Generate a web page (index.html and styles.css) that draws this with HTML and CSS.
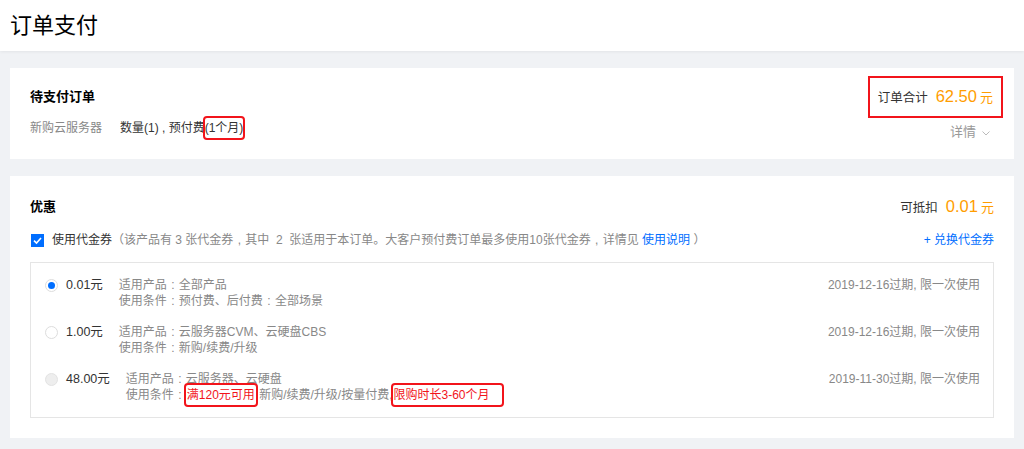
FILE: index.html
```html
<!DOCTYPE html>
<html lang="zh-CN">
<head>
<meta charset="utf-8">
<title>订单支付</title>
<link rel="stylesheet" href="styles.css">
</head>
<body>
<header class="topbar"><h1 class="title">订单支付</h1></header>
<main class="main">
  <section class="card order">
    <div class="order-left">
      <h2 class="card-title">待支付订单</h2>
      <div class="order-line">
        <span class="muted">新购云服务器</span>
        <span class="dark">数量(1) , 预付费<span class="mark mark-month">(1个月)</span></span>
      </div>
    </div>
    <div class="order-right">
      <div class="total"><span class="total-label">订单合计</span><span class="price">62.50</span><span class="unit">元</span></div>
      <div class="detail">详情<svg class="chev" width="8" height="5" viewBox="0 0 8 5"><path d="M0.5 0.5 L4 4 L7.5 0.5" fill="none" stroke="#bbb" stroke-width="1"/></svg></div>
    </div>
  </section>

  <section class="card promo">
    <div class="promo-head">
      <h2 class="card-title">优惠</h2>
      <div class="deduct"><span class="total-label">可抵扣</span><span class="price">0.01</span><span class="unit">元</span></div>
    </div>
    <div class="promo-use">
      <label class="use">
        <span class="checkbox"><svg width="13" height="13" viewBox="0 0 13 13"><path d="M3 6.6 L5.5 9 L10 4" fill="none" stroke="#fff" stroke-width="1.6"/></svg></span>
        <span class="dark">使用代金券</span>
        <span class="muted">（该产品有 3 张代金券<span class="fw">,</span>其中 &nbsp;2&nbsp; 张适用于本订单。大客户预付费订单最多使用10张代金券<span class="fw">,</span>详情见 <a class="link" href="#">使用说明</a> ）</span>
      </label>
      <a class="link" href="#">+ 兑换代金券</a>
    </div>
    <div class="coupons">
      <div class="coupon">
        <span class="radio checked"></span>
        <span class="amount">0.01元</span>
        <div class="info">
          <div>适用产品<span class="fw">:</span>全部产品</div>
          <div>使用条件<span class="fw">:</span>预付费、后付费<span class="fw">:</span>全部场景</div>
        </div>
        <span class="expire">2019-12-16过期, 限一次使用</span>
      </div>
      <div class="coupon">
        <span class="radio"></span>
        <span class="amount">1.00元</span>
        <div class="info">
          <div>适用产品<span class="fw">:</span>云服务器CVM、云硬盘CBS</div>
          <div>使用条件<span class="fw">:</span>新购/续费/升级</div>
        </div>
        <span class="expire">2019-12-16过期, 限一次使用</span>
      </div>
      <div class="coupon">
        <span class="radio disabled"></span>
        <span class="amount">48.00元</span>
        <div class="info">
          <div>适用产品<span class="fw">:</span>云服务器、云硬盘</div>
          <div>使用条件<span class="fw">:</span><span class="mark red">满120元可用</span> 新购/续费/升级/按量付费,<span class="mark red mark-wide">限购时长3-60个月</span></div>
        </div>
        <span class="expire">2019-11-30过期, 限一次使用</span>
      </div>
    </div>
  </section>
</main>
</body>
</html>
```

FILE: styles.css
```css
* { box-sizing: border-box; }
html, body { margin: 0; padding: 0; }
body {
  background: #f0f2f5;
  font-family: "Liberation Sans", "Noto Sans CJK SC", sans-serif;
  font-size: 12px;
  color: #333;
}
.topbar {
  height: 51px;
  background: #fff;
  padding-left: 10px;
  box-shadow: 0 1px 3px rgba(0,0,0,0.06);
}
.title {
  margin: 0;
  font-size: 22px;
  font-weight: normal;
  line-height: 51px;
  color: #000;
}
.main {
  padding: 17px 10px;
  display: flex;
  flex-direction: column;
  gap: 17px;
}
.card {
  background: #fff;
  padding: 0 20px;
}
.card-title {
  margin: 0;
  font-size: 13px;
  font-weight: bold;
  line-height: 20px;
  color: #000;
}
.order {
  height: 91px;
  display: flex;
  justify-content: space-between;
}
.order-left { padding-top: 19px; }
.order-line {
  margin-top: 11px;
  line-height: 20px;
  display: flex;
  gap: 18px;
}
.muted { color: #888; }
.dark { color: #333; }
.fw {
  display: inline-block;
  width: 12px;
  text-align: center;
}
.mark {
  outline: 2px solid #f2141b;
  border-radius: 2px;
}
.mark-month {
  padding: 3px 0;
  outline-offset: 0;
}
.order-right {
  padding-top: 18px;
  display: flex;
  flex-direction: column;
  align-items: flex-end;
}
.total, .deduct {
  display: flex;
  align-items: baseline;
  line-height: 20px;
}
.total {
  outline: 2px solid #f2141b;
  outline-offset: 8px;
  margin-right: 1px;
}
.total-label { font-size: 12.5px; color: #333; }
.price {
  font-size: 16.5px;
  color: #ff9d00;
  margin-left: 8px;
}
.unit {
  font-size: 13px;
  color: #ff9d00;
  margin-left: 3px;
}
.detail {
  margin-top: 14px;
  margin-right: 4px;
  line-height: 20px;
  font-size: 13px;
  color: #999;
  display: flex;
  align-items: center;
  gap: 6px;
}
.chev { margin-top: 2px; }
.promo { height: 262px; padding-top: 20px; }
.promo-head {
  display: flex;
  justify-content: space-between;
  align-items: center;
}
.promo-use {
  margin-top: 12px;
  line-height: 20px;
  display: flex;
  justify-content: space-between;
  align-items: center;
}
.use { display: flex; align-items: center; }
.checkbox {
  width: 13px;
  height: 13px;
  background: #006eff;
  display: inline-flex;
  margin: 0 8px 0 1px;
}
.link { color: #006eff; text-decoration: none; }
.coupons {
  margin-top: 12px;
  border: 1px solid #e5e5e5;
  padding: 14px 13px 14px 14px;
  display: flex;
  flex-direction: column;
  gap: 15px;
}
.coupon {
  display: flex;
  align-items: flex-start;
  line-height: 16px;
}
.radio {
  width: 13px;
  height: 13px;
  border-radius: 50%;
  border: 1px solid #ddd;
  background: #fff;
  margin-top: 2px;
  margin-right: 8px;
  flex: none;
  display: flex;
  align-items: center;
  justify-content: center;
}
.radio.checked::after {
  content: "";
  width: 7px;
  height: 7px;
  border-radius: 50%;
  background: #006eff;
}
.radio.disabled { background: #eee; border-color: #e3e3e3; }
.amount {
  color: #333;
  font-size: 12.5px;
  margin-right: 16px;
}
.info { color: #888; flex: 1; }
.red {
  color: #f2141b;
  padding: 3px 1px;
}
.mark-wide { padding-right: 12px; }
.expire { color: #888; }
```
